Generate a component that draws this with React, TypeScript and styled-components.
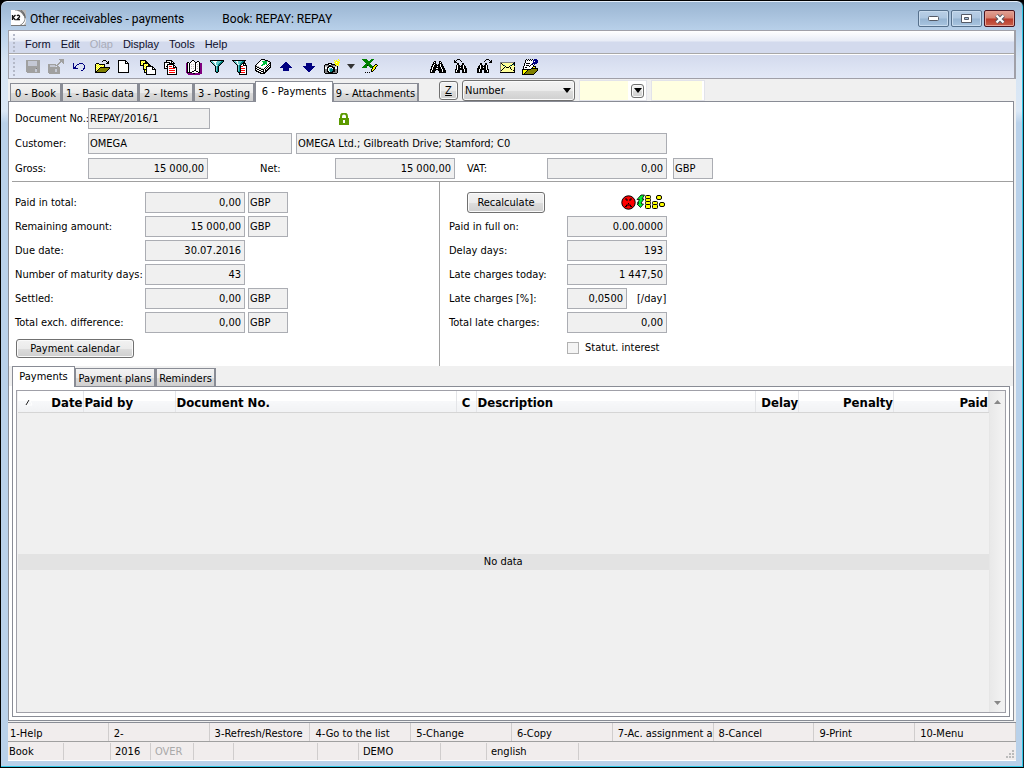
import React from "react";
import styled, { createGlobalStyle, css } from "styled-components";

const GlobalStyle = createGlobalStyle`
  * { box-sizing: border-box; }
  body { margin: 0; background: #000; }
  body, button, input, select, table {
    font-family: "DejaVu Sans Condensed", "DejaVu Sans", sans-serif;
    font-size: 11px;
    line-height: 14px;
    color: #000;
  }
`;

/* ---------- pixel icons ---------- */

const palette: Record<string, string> = {
  k: "#000000",
  w: "#ffffff",
  g: "#a0a0a0",
  l: "#c4c8d4",
  n: "#000080",
  y: "#ffff00",
  c: "#ffff99",
  o: "#808000",
  r: "#ff0000",
  p: "#800080",
  t: "#008080",
  e: "#008000",
  b: "#66cccc",
  s: "#c0c0c0",
  d: "#808080",
  L: "#00c040",
};

const glyphs: Record<string, string[]> = {
  save: [
    "................",
    ".gggggggggggggg.",
    ".gglllllllllggg.",
    ".gglllllllllggg.",
    ".gglllllllllggg.",
    ".gglllllllllggg.",
    ".gglllllllllggg.",
    ".gggggggggggggg.",
    ".gggggggggggggg.",
    ".ggggggggggdggg.",
    ".gggggggggllggg.",
    ".gggggggggllggg.",
    ".gggggggggllggg.",
    "..ggggggggggggg.",
    "................",
    "................",
  ],
  saveExit: [
    "...........ggggg",
    "............gggg",
    "............gggg",
    "...........gg.gg",
    "..........gg...g",
    "gggggggg.gg.....",
    "gglllllggg......",
    "ggllllll.gg.....",
    "gggggggggggg....",
    "gggggggggggg....",
    "gggggggllggg....",
    "gggggggllggg....",
    "gggggggllggg....",
    "gggggggggggg....",
    ".ggggggggggg....",
    "................",
  ],
  undo: [
    "................",
    "................",
    "................",
    "................",
    "..n.....nnnn....",
    "..n...nn....n...",
    "..n..n.......n..",
    "..n.n........n..",
    "..nnn........n..",
    "..nnnnn.....nn..",
    "............n...",
    "..........nn....",
    "................",
    "................",
    "................",
    "................",
  ],
  open: [
    "................",
    ".........kkk....",
    "........k...k.k.",
    ".............kk.",
    "..kkk.......kkk.",
    ".kcyckkkkkk.....",
    ".kycycycyck.....",
    ".kcycycycyk.....",
    ".kycyckkkkkkkkkk",
    ".kcyckoooooooook",
    ".kyckoooooooook.",
    ".kckoooooooook..",
    ".kkoooooooook...",
    ".kkkkkkkkkkk....",
    "................",
    "................",
  ],
  page: [
    "................",
    ".kkkkkkkk.......",
    ".kwwwwwwkk......",
    ".kwwwwwwkwk.....",
    ".kwwwwwwkkkk....",
    ".kwwwwwwwwwk....",
    ".kwwwwwwwwwk....",
    ".kwwwwwwwwwk....",
    ".kwwwwwwwwwk....",
    ".kwwwwwwwwwk....",
    ".kwwwwwwwwwk....",
    ".kwwwwwwwwwk....",
    ".kwwwwwwwwwk....",
    ".kkkkkkkkkkk....",
    "................",
    "................",
  ],
  stack: [
    "................",
    "kkkkkk..........",
    "kycyckk.........",
    "kcycykkk........",
    "kyckkkkkk.......",
    "kcykycyckk......",
    "kkkkcycykkk.....",
    "...kyckkkkkkk...",
    "...kcykwwwwwkk..",
    "...kyckwwwwwkwk.",
    "...kkkkwwwwwkkkk",
    "....kykwwwwwwwwk",
    "....kckwwwwwwwwk",
    "....kkkwwwwwwwwk",
    "......kwwwwwwwwk",
    "......kkkkkkkkkk",
  ],
  pageList: [
    "................",
    "...kkkkkk.......",
    "...kwwwwkk......",
    ".kkkkkkwkwk.....",
    ".kwwwwkkkkkk....",
    ".kwwkkkkkkk.....",
    ".kwwkwwwwwkk....",
    ".kwkkwrrrwkwk...",
    ".kwwkwwwwwkkkk..",
    ".kkkkwrrrrrrwk..",
    "....kwwwwwwwwk..",
    "....kwrrrrrrwk..",
    "....kwwwwwwwwk..",
    "....kwrrrrrrwk..",
    "....kwwwwwwwwk..",
    "....kkkkkkkkkk..",
  ],
  book: [
    "................",
    "......kk........",
    ".....kwwk..kk...",
    ".kk.kwwwwkkwwk..",
    "pkwkwwwwwkwwwkpp",
    "pkwkwswswkwswkpp",
    "pkwkwwwwwkwwwkpp",
    "pkwkwswswkwswkpp",
    "pkwkwwwwwkwwwkpp",
    "pkwkwswswkwswkpp",
    "pkwkwwwwwkwwwkpp",
    "pkwkwwwwkkwwwkpp",
    "pkwkwwkkwwkkwkpp",
    "pkkkkkwwwwwwkkpp",
    ".ppppppkkppppppp",
    "..pppppppppppp..",
  ],
  filter: [
    "................",
    ".kkkkkkkkkkkkkk.",
    ".kbbwwwwbbbbttk.",
    "..kbbwwbbbbttk..",
    "...kbbwbbbttk...",
    "....kbwbbttk....",
    ".....kbwbtk.....",
    "......kbtk......",
    "......kbtk......",
    "......kbtk......",
    "......kbtk......",
    "......kbtk......",
    "......kttk......",
    ".......kk.......",
    "................",
    "................",
  ],
  filterList: [
    "................",
    "kkkkkkkkkkkkkk..",
    ".kbbwwbbbbttk...",
    "..kbbwbbbttkk...",
    "...kbwbbttkkkk..",
    "....kbwbtkwkwk..",
    ".....kbtkwwkkkk.",
    ".....kbtkrrwwwk.",
    ".....kbtkwwwwwk.",
    ".....kbtkrrrrwk.",
    ".....kbtkwwwwwk.",
    ".....kbtkrrrrwk.",
    ".....kttkwwwwwk.",
    "......kkkrrrrwk.",
    ".......kwwwwwwk.",
    ".......kkkkkkkk.",
  ],
  books: [
    "......kkkk......",
    ".....kwwwskkk...",
    "....kwwLLLLLskk.",
    "...kwwwwLLLLwwsk",
    "..kwwwwwLLLLwwkk",
    ".kwwwwwLLLwLwkwk",
    "kswwwwLLwwwwkwkk",
    "kksswwwwwwwkwkwk",
    "kwkksswwwwkwkwkk",
    "kkwwkksswkwkwkk.",
    "kwkkwwkkkwkwkk..",
    "kkwwkkwwkwkkk...",
    ".kkkwwkkkwkk....",
    "...kkkwwkkk.....",
    ".....kkkkk......",
    "................",
  ],
  up: [
    "................",
    "................",
    "................",
    ".......nn.......",
    "......nnnn......",
    ".....nnnnnn.....",
    "....nnnnnnnn....",
    "...nnnnnnnnnn...",
    "..nnnnnnnnnnnn..",
    ".....nnnnnn.....",
    ".....nnnnnn.....",
    ".....nnnnnn.....",
    "................",
    "................",
    "................",
    "................",
  ],
  down: [
    "................",
    "................",
    "................",
    "................",
    ".....nnnnnn.....",
    ".....nnnnnn.....",
    ".....nnnnnn.....",
    "..nnnnnnnnnnnn..",
    "...nnnnnnnnnn...",
    "....nnnnnnnn....",
    ".....nnnnnn.....",
    "......nnnn......",
    ".......nn.......",
    "................",
    "................",
    "................",
  ],
  camera: [
    "..............y.",
    "..........y.y..y",
    "...........yyyy.",
    "..........yywyyy",
    "....kkkk...yyyy.",
    ".kkkkwwkkkkyyyy.",
    "kddddkkddddky.y.",
    "kssskkkkkssssk..",
    "kwwkkwwwkkkwwk..",
    "kwwkwbbtwkkwwk..",
    "kddkwbtttkkddk..",
    "kddkwbtttkkddk..",
    "kddkkwttkkkddk..",
    "kdddkkkkkddddk..",
    ".kkkkkkkkkkkk...",
    "................",
  ],
  sheet: [
    "eeeee....eee....",
    ".eeeee..eee.....",
    "..eeeeeeee......",
    "...eeeeee.......",
    "....eeee........",
    "...eeeeee....kk.",
    "..eeekeeee..kyyk",
    ".eeee..eeeekyyk.",
    "eeeee...eekyyk..",
    "..........kyyk..",
    ".........kyyk...",
    ".........kyk....",
    ".........kk.....",
    "...k.k.k........",
    "................",
    "................",
  ],
  find: [
    "................",
    "................",
    "....kk...kk.....",
    "...kwk...kwk....",
    "...kkk...kkk....",
    "..kkwkk.kkwkk...",
    "..kwkkkkkkwkk...",
    ".kkwkkkwkkwkkk..",
    ".kwkkkkkkkkwkk..",
    ".kwkkkwwkkkwkkk.",
    "kkwkkkkkkkkkwkk.",
    "kwkkkk..kkkkwkkk",
    "kwkkk....kkkwkkk",
    "kkkkk....kkkkkkk",
    "................",
    "................",
  ],
  findPrev: [
    "....kkk.........",
    ".k.k...k........",
    ".kk.....k.......",
    ".kkk............",
    "....kk...kk.....",
    "....kk...kk.....",
    "...kwkk.kkwk....",
    "...kwkkkkkwkk...",
    "...kwkkwkkwkk...",
    "...kwkkkkkwkkk..",
    "..kkwkkkkkkwkk..",
    "..kwkkk..kkwkk..",
    "..kwkkk..kkwkk..",
    "..kkkkk..kkkkk..",
    "................",
    "................",
  ],
  findNext: [
    "..........kkk...",
    ".........k...k.k",
    "........k.....kk",
    ".............kkk",
    "....kk...kk.....",
    "....kk...kk.....",
    "...kwkk.kkwk....",
    "..kkwkkkkkwk....",
    "..kkwkkwkkwk....",
    ".kkkwkkkkkwk....",
    ".kkwkkkkkkwkk...",
    ".kkwkk..kkkwk...",
    ".kkwkk..kkkwk...",
    ".kkkkk..kkkkk...",
    "................",
    "................",
  ],
  mail: [
    "................",
    "................",
    "................",
    ".ddddddddddddddk",
    ".dkccccccccccckk",
    ".dckcccccccccktk",
    ".dccktccccctkcck",
    ".dcccckccckccccc",
    ".dccckckkkckccck",
    ".dcckcccccckccck",
    ".dckcccccccckcck",
    ".dkccccccccccckk",
    ".dccccccccccccck",
    ".kkkkkkkkkkkkkkk",
    "................",
    "................",
  ],
  notes: [
    "....k.k.k.k.nnn.",
    "...kwkwkwkwnnnnn",
    "...kwwwwwwwnwnnn",
    "...kwwwwwwwnnnnn",
    "..kwkkkkwwnnnnn.",
    "..kwwwwwwnkwn...",
    "..kwkkkwkwwk....",
    ".kwwwwwkwwwkkk..",
    ".kwkkwwwwwkyyk..",
    ".kwwwwwwwkkkkkkk",
    "kkkkkkkkkooooook",
    "kyyyykoooooooook",
    "kyyykoooooooook.",
    "kyykoooooooook..",
    "kykoooooooook...",
    "kkkkkkkkkkkk....",
  ],
};

function PixelIcon({ name }: { name: string }) {
  const rects: React.ReactNode[] = [];
  glyphs[name].forEach((row, y) => {
    let x = 0;
    while (x < row.length) {
      const ch = row[x];
      let end = x + 1;
      while (end < row.length && row[end] === ch) end++;
      if (ch !== ".") {
        rects.push(<rect key={`${x}-${y}`} x={x} y={y} width={end - x} height={1} fill={palette[ch]} />);
      }
      x = end;
    }
  });
  return (
    <svg width="16" height="16" viewBox="0 0 16 16" shapeRendering="crispEdges" aria-hidden="true">
      {rects}
    </svg>
  );
}

/* ---------- window frame ---------- */

const WindowFrame = styled.div`
  display: flex;
  flex-direction: column;
  min-height: 100vh;
  padding: 0 7px 6px;
  border: 1px solid #000;
  border-right-color: #14202a;
  border-radius: 7px 7px 0 0;
  box-shadow: inset -1px -1px 0 #2fc7e6, inset 0 1px 0 #e4eefa;
  background: linear-gradient(#99b4d1, #b9d1ea 30px, #d6e4f3 60px, #dbe8f6 110px, #b9d1ea 122px);
`;

const TitleBar = styled.header`
  display: flex;
  align-items: flex-start;
  height: 29px;
  padding: 9px 1px 0 3px;
`;

const AppLogo = styled.svg`
  flex: none;
  margin-right: 4px;
`;

const Title = styled.h1<{ $indent?: boolean }>`
  margin: 0;
  padding-left: ${(p) => (p.$indent ? "38px" : "0")};
  font: 12px/18px Roboto, "Noto Sans", sans-serif;
  white-space: nowrap;
`;

const WindowButtons = styled.div`
  display: flex;
  gap: 2px;
  margin-left: auto;
`;

const WindowButton = styled.button<{ $danger?: boolean }>`
  display: flex;
  align-items: center;
  justify-content: center;
  width: 31px;
  height: 17px;
  padding: 0;
  border: 1px solid ${(p) => (p.$danger ? "#4a1420" : "#56708c")};
  border-radius: 2px;
  box-shadow: inset 0 0 0 1px ${(p) => (p.$danger ? "#e6a093" : "#c8dbee")};
  background: ${(p) =>
    p.$danger
      ? "linear-gradient(#e0a094, #d6806f 48%, #b8392a 52%, #c9604a)"
      : "linear-gradient(#b9cfe6, #adc6e0 48%, #96b4d2 52%, #a9c5e0)"};
`;

const Client = styled.main`
  display: flex;
  flex: 1;
  flex-direction: column;
  background: #f0f0f0;
`;

/* ---------- menu and toolbar ---------- */

const Bars = styled.div`
  border: 1px solid #a0a0a8;
  border-right-width: 2px;
`;

const bar = css`
  display: flex;
  align-items: center;
  padding-left: 4px;
`;

const MenuBar = styled.nav`
  ${bar}
  height: 23px;
  padding-top: 2px;
  border-bottom: 1px solid #a8a8a8;
  background: linear-gradient(#fff, #e8ecf6 10px, #d3daed 11px);
`;

const ToolBar = styled.div`
  ${bar}
  height: 24px;
  border-top: 1px solid #fff;
  background: linear-gradient(#d3daed, #e3e9f7);
`;

const Grip = styled.span`
  width: 2px;
  height: 18px;
  margin-right: 6px;
  background: repeating-linear-gradient(#b4b9c8 0 2px, transparent 2px 4px);
`;

const MenuItem = styled.button`
  height: 20px;
  margin-right: 10px;
  padding: 2px 0 0;
  border: 0;
  background: none;
  font: 11px/14px "Liberation Sans", Arial, sans-serif;
  color: #10102c;

  &:first-of-type {
    margin-left: 4px;
  }

  &:disabled {
    color: #a9acb8;
  }
`;

const ToolButton = styled.button<{ $narrow?: boolean }>`
  display: flex;
  flex: none;
  align-items: center;
  justify-content: center;
  width: ${(p) => (p.$narrow ? "15px" : "23px")};
  height: 22px;
  padding: 0;
  border: 0;
  background: none;
`;

const ToolGap = styled.span`
  width: 45px;
`;

/* ---------- tabs ---------- */

const TabStrip = styled.div<{ $inner?: boolean }>`
  display: flex;
  align-items: flex-end;
  height: ${(p) => (p.$inner ? "20px" : "22px")};
  padding-left: ${(p) => (p.$inner ? "0" : "2px")};
  background: #f0f0f0;
`;

const Tab = styled.button<{ $width: number; $active?: boolean }>`
  flex: none;
  width: ${(p) => p.$width}px;
  height: 18px;
  padding: 2px 0 0;
  border: 1px solid #898c95;
  border-right-width: 2px;
  border-bottom: 0;
  background: linear-gradient(#f3f3f3, #ebebeb 50%, #dcdcdc 51%, #cfcfcf);
  white-space: nowrap;

  ${(p) =>
    p.$active &&
    css`
      position: relative;
      height: 21px;
      margin-bottom: -1px;
      padding: 0;
      border-right-width: 1px;
      background: #fff;
    `}
`;

const Search = styled.div`
  display: flex;
  align-items: flex-start;
  gap: 4px;
  height: 21px;
  padding-left: 20px;
`;

const button = css`
  border: 1px solid #707070;
  border-radius: 3px;
  box-shadow: inset 0 0 0 1px #fafafa;
  background: linear-gradient(#f2f2f2, #ebebeb 50%, #dddddd 51%, #cfcfcf);
`;

const ZButton = styled.button`
  ${button}
  width: 19px;
  height: 19px;
  margin-top: 1px;
  padding: 0;
  text-decoration: underline;
`;

const SelectWrap = styled.span`
  position: relative;

  & > svg {
    position: absolute;
    top: 8px;
    right: 4px;
    pointer-events: none;
  }
`;

const NumberSelect = styled.select`
  ${button}
  display: block;
  width: 113px;
  height: 21px;
  padding: 0 2px;
  appearance: none;
`;

const YellowBox = styled.span<{ $width: number }>`
  display: flex;
  align-items: center;
  width: ${(p) => p.$width}px;
  height: 21px;
  padding-right: 2px;
  border: 1px solid #e2e3ea;
  background: #fff;
`;

const YellowInput = styled.input`
  flex: 1;
  min-width: 0;
  height: 19px;
  padding: 0 2px;
  border: 0;
  background: #ffffe1;
`;

const DropButton = styled.button`
  ${button}
  display: flex;
  align-items: center;
  justify-content: center;
  width: 13px;
  height: 14px;
  margin-left: 3px;
  padding: 0;
`;

/* ---------- form ---------- */

const Panel = styled.section`
  display: flex;
  flex: 1;
  flex-direction: column;
  margin-right: 2px;
  padding: 0 0 3px;
  border: 1px solid #898c95;
  background: #fff;
`;

const Head = styled.div`
  display: flex;
  flex-direction: column;
  gap: 4px;
  margin: 0 0 0 3px;
  padding: 6px 0 2px 3px;
  border-bottom: 1px solid #a0a0a0;
`;

const Row = styled.div`
  display: flex;
  align-items: center;
  height: 21px;
`;

const Label = styled.label<{ $width: number }>`
  flex: none;
  width: ${(p) => p.$width}px;
  white-space: nowrap;
`;

const Field = styled.input<{ $width: number; $right?: boolean; $gap?: number }>`
  flex: none;
  width: ${(p) => p.$width}px;
  height: 21px;
  margin-right: ${(p) => p.$gap ?? 3}px;
  padding: 0 3px 1px 1px;
  border: 1px solid #abadb3;
  border-radius: 0;
  background: #f0f0f0;
  text-align: ${(p) => (p.$right ? "right" : "left")};
`;

const LockMark = styled.svg`
  margin-left: 126px;
`;

const Details = styled.div`
  display: flex;
`;

const LeftDetails = styled.div`
  display: flex;
  flex-direction: column;
  gap: 3px;
  width: 431px;
  padding: 10px 0 7px 6px;
  border-right: 1px solid #a0a0a0;
`;

const RightDetails = styled.div`
  display: flex;
  flex-direction: column;
  gap: 3px;
  padding: 10px 0 0 9px;
`;

const ButtonRow = styled(Row)`
  margin-top: 2px;
`;

const PushButton = styled.button<{ $width: number; $start?: number }>`
  ${button}
  flex: none;
  width: ${(p) => p.$width}px;
  height: ${(p) => (p.$start ? "21px" : "19px")};
  margin-left: ${(p) => p.$start ?? 1}px;
  padding: 0;
`;

const FaceMark = styled.svg`
  margin-left: 76px;
`;

const CheckRow = styled.label`
  display: flex;
  align-items: center;
  gap: 6px;
  margin: 5px 0 0 118px;
`;

const CheckBox = styled.input`
  width: 12px;
  height: 12px;
  margin: 0;
  border: 1px solid #b1b1b1;
  background: #f4f4f4;
  appearance: none;
`;

/* ---------- payments list ---------- */

const ListArea = styled.div`
  display: flex;
  flex: 1;
  flex-direction: column;
  padding: 0 3px 0 3px;
  background: linear-gradient(#f0f0f0 20px, #fff 20px);
`;

const ListPanel = styled.div`
  display: flex;
  flex: 1;
  padding: 3px;
  border: 1px solid #898c95;
  background: #fff;
`;

const ListBox = styled.div`
  display: flex;
  flex: 1;
  padding: 0 1px;
  border: 1px solid #a0a0a8;
  background: #f0f0f0;
`;

const Grid = styled.table`
  flex: 1;
  width: 100%;
  border-collapse: collapse;
  table-layout: fixed;
`;

const HeadCell = styled.th<{ $width?: number; $align?: string }>`
  width: ${(p) => (p.$width ? `${p.$width}px` : "auto")};
  height: 21px;
  padding: 3px 0 0 ${(p) => (p.$align ? "0" : "1px")};
  border-right: 1px solid #e4e5e8;
  border-bottom: 1px solid #d5d5d5;
  background: linear-gradient(#fff, #fff 50%, #f7f8fa 50%, #f1f2f4);
  font-size: 13px;
  line-height: 16px;
  text-align: ${(p) => p.$align ?? "left"};
  white-space: nowrap;
`;

const SortMark = styled.svg`
  float: left;
  margin: 4px 0 0 7px;
`;

const EmptyCell = styled.td`
  padding: 0;
  vertical-align: middle;
`;

const EmptyBand = styled.div`
  height: 16px;
  background: #e3e3e3;
  line-height: 16px;
  text-align: center;
`;

const ScrollBar = styled.div`
  display: flex;
  flex-direction: column;
  justify-content: space-between;
  width: 15px;
  border-left: 1px solid #e6e6e6;
  background: linear-gradient(90deg, #e9e9e9, #f3f3f3);
`;

const ScrollButton = styled.button`
  height: 20px;
  padding: 0;
  border: 0;
  background: none;
`;

/* ---------- bottom bars ---------- */

const FunctionBar = styled.div`
  display: grid;
  grid-template-columns: repeat(10, 1fr);
  height: 20px;
  margin-top: 1px;
  border-top: 1px solid #898c95;
  border-bottom: 1px solid #a0a0a0;
  background: #f1eded;
`;

const FunctionKey = styled.button`
  min-width: 0;
  padding: 3px 0 0 5px;
  border: 0;
  border-right: 1px solid #d0cdcd;
  background: none;
  overflow: hidden;
  text-align: left;
  white-space: nowrap;

  &:first-child {
    padding-left: 2px;
  }
`;

const StatusBar = styled.footer`
  display: flex;
  height: 19px;
  padding-top: 1px;
  border-bottom: 1px solid #fff;
  background: #f1eded;
`;

const StatusCell = styled.span<{ $width?: number; $muted?: boolean }>`
  flex: ${(p) => (p.$width ? "none" : "1")};
  width: ${(p) => (p.$width ? `${p.$width}px` : "auto")};
  padding: 2px 0 0 ${(p) => (p.$width === 56 ? "1px" : "4px")};
  border-right: ${(p) => (p.$width ? "1px solid #d0cdcd" : "0")};
  color: ${(p) => (p.$muted ? "#a9a9a9" : "#000")};
`;

const SizeGrip = styled.svg`
  align-self: flex-end;
`;

/* ---------- data ---------- */

const menus = ["Form", "Edit", "Olap", "Display", "Tools", "Help"];

const tabs: [string, number][] = [
  ["0 - Book", 52],
  ["1 - Basic data", 77],
  ["2 - Items", 55],
  ["3 - Posting", 61],
  ["6 - Payments", 78],
  ["9 - Attachments", 86],
];

const listTabs: [string, number][] = [
  ["Payments", 63],
  ["Payment plans", 81],
  ["Reminders", 60],
];

const tools = ["save", "saveExit", "undo", "open", "page", "stack", "pageList", "book", "filter", "filterList", "books", "up", "down", "camera"];
const searchTools = ["find", "findPrev", "findNext", "mail", "notes"];

const leftRows: [string, string, string?][] = [
  ["Paid in total:", "0,00", "GBP"],
  ["Remaining amount:", "15 000,00", "GBP"],
  ["Due date:", "30.07.2016"],
  ["Number of maturity days:", "43"],
  ["Settled:", "0,00", "GBP"],
  ["Total exch. difference:", "0,00", "GBP"],
];

const rightRows: [string, string, string?][] = [
  ["Paid in full on:", "0.00.0000"],
  ["Delay days:", "193"],
  ["Late charges today:", "1 447,50"],
  ["Late charges [%]:", "0,0500", "[/day]"],
  ["Total late charges:", "0,00"],
];

const functionKeys = ["1-Help", "2-", "3-Refresh/Restore", "4-Go to the list", "5-Change", "6-Copy", "7-Ac. assignment an", "8-Cancel", "9-Print", "10-Menu"];

const statusCells: [string, number][] = [
  ["Book", 56],
  ["", 47],
  ["2016", 40],
  ["OVER", 43],
  ["", 40],
  ["", 84],
  ["", 41],
  ["DEMO", 82],
  ["", 46],
  ["english", 92],
];

const Caret = ({ color = "#000" }: { color?: string }) => (
  <svg width="8" height="5" viewBox="0 0 8 5" aria-hidden="true">
    <path d="M0 0h8L4 5z" fill={color} />
  </svg>
);

function Coins() {
  return (
    <FaceMark width="45" height="17" viewBox="0 0 45 17" aria-label="Overdue">
      <circle cx="7.500" cy="8.500" r="6.700" fill="#f00" stroke="#000" />
      <path d="M4 5h2v2M11 5H9v2M4 12.500h1.500v-1.500h4v1.500H11M7 9.500h1" fill="none" stroke="#000" />
      <path d="M20 1l-4 4.500h2.500L16.500 9h1.500l-2 1 3.500 3.500 3-3.500h-1.500l-1-1 3-4h-2l2.500-4z" fill="#0e3" stroke="#000" strokeWidth=".800" />
      <g fill="#ff0" stroke="#000">
        <rect x="24.500" y="1.500" width="5" height="3" rx="1" />
        <rect x="24.500" y="4.500" width="5" height="3" rx="1" />
        <rect x="24.500" y="7.500" width="5" height="3" rx="1" />
        <rect x="24.500" y="10.500" width="5" height="4" rx="1" />
        <rect x="31.500" y="7.500" width="5" height="3" rx="1" />
        <rect x="31.500" y="10.500" width="5" height="4" rx="1" />
        <rect x="35.500" y="1.500" width="5" height="4" rx="1.500" />
        <rect x="38.500" y="8.500" width="5" height="4" rx="1.500" />
      </g>
    </FaceMark>
  );
}

export default function App() {
  return (
    <>
      <GlobalStyle />
      <WindowFrame>
        <TitleBar>
          <AppLogo width="15" height="16" viewBox="0 0 15 16" aria-hidden="true">
            <path d="M0 0h15v16H0z" fill="#fff" />
            <path d="M8 0l7 9V0zM15 10c0 3-2 5-4 6h4z" fill="#bbb" />
            <path d="M7 0c4 1 7 4 7 8s-3 7-7 8M10 0c3 2 4 5 4 8M4 0c4 0 8 3 9 6" fill="none" stroke="#555" strokeWidth=".700" />
            <path d="M1.500 5v5M4.500 5L2 7.500 4.500 10M6 6c1-1.500 3-.500 2.500 1L6 9.500h3" fill="none" stroke="#111" strokeWidth="1.300" />
            <path d="M0 15.500h15" stroke="#777" />
          </AppLogo>
          <Title>Other receivables - payments</Title>
          <Title as="span" $indent>Book: REPAY: REPAY</Title>
          <WindowButtons>
            <WindowButton aria-label="Minimize">
              <svg width="11" height="5" viewBox="0 0 11 5"><rect x=".500" y=".500" width="10" height="4" rx="1" fill="#fff" stroke="#555a66" /></svg>
            </WindowButton>
            <WindowButton aria-label="Maximize">
              <svg width="11" height="9" viewBox="0 0 11 9"><path d="M.5.5h10v8H.5zM3.500 3.500v2h4v-2z" fill="#fff" fillRule="evenodd" stroke="#555a66" /></svg>
            </WindowButton>
            <WindowButton $danger aria-label="Close">
              <svg width="12" height="10" viewBox="0 0 12 10">
                <path d="M2.500 1.500l7 7M9.500 1.500l-7 7" stroke="#555a66" strokeWidth="4" />
                <path d="M2.500 1.500l7 7M9.500 1.500l-7 7" stroke="#fff" strokeWidth="2.200" />
              </svg>
            </WindowButton>
          </WindowButtons>
        </TitleBar>

        <Client>
          <Bars>
            <MenuBar>
              <Grip />
              {menus.map((m) => (
                <MenuItem key={m} disabled={m === "Olap"}>{m}</MenuItem>
              ))}
            </MenuBar>
            <ToolBar>
              <Grip />
              {tools.map((t) => (
                <ToolButton key={t} aria-label={t}><PixelIcon name={t} /></ToolButton>
              ))}
              <ToolButton $narrow aria-label="Camera options"><Caret color="#333" /></ToolButton>
              <ToolButton aria-label="sheet"><PixelIcon name="sheet" /></ToolButton>
              <ToolGap />
              {searchTools.map((t) => (
                <ToolButton key={t} aria-label={t}><PixelIcon name={t} /></ToolButton>
              ))}
            </ToolBar>
          </Bars>

          <TabStrip>
            {tabs.map(([name, width]) => (
              <Tab key={name} $width={width} $active={name.startsWith("6")}>{name}</Tab>
            ))}
            <Search>
              <ZButton>Z</ZButton>
              <SelectWrap>
                <NumberSelect aria-label="Search by"><option>Number</option></NumberSelect>
                <Caret />
              </SelectWrap>
              <YellowBox $width={68}>
                <YellowInput aria-label="Search from" />
                <DropButton aria-label="Choose"><Caret /></DropButton>
              </YellowBox>
              <YellowBox $width={54}>
                <YellowInput aria-label="Search to" />
              </YellowBox>
            </Search>
          </TabStrip>

          <Panel>
            <Head>
              <Row>
                <Label $width={73} htmlFor="doc">Document No.:</Label>
                <Field $width={122} id="doc" readOnly value="REPAY/2016/1" />
                <LockMark width="10" height="12" viewBox="0 0 10 12" aria-label="Locked">
                  <path d="M2 6V3.500a3 3 0 0 1 6 0V6" fill="none" stroke="#5c9a00" strokeWidth="2" />
                  <path d="M0 5h10v7H0z" fill="#5c9a00" />
                  <path d="M4 7h2v3H4z" fill="#fff" />
                </LockMark>
              </Row>
              <Row>
                <Label $width={73} htmlFor="customer">Customer:</Label>
                <Field $width={204} id="customer" $gap={4} readOnly value="OMEGA" />
                <Field $width={371} aria-label="Customer address" readOnly value="OMEGA Ltd.; Gilbreath Drive; Stamford; C0" />
              </Row>
              <Row>
                <Label $width={73} htmlFor="gross">Gross:</Label>
                <Field $width={120} id="gross" $right $gap={52} readOnly value="15 000,00" />
                <Label $width={75} htmlFor="net">Net:</Label>
                <Field $width={120} id="net" $right $gap={12} readOnly value="15 000,00" />
                <Label $width={80} htmlFor="vat">VAT:</Label>
                <Field $width={120} id="vat" $right $gap={6} readOnly value="0,00" />
                <Field $width={40} aria-label="Currency" readOnly value="GBP" />
              </Row>
            </Head>

            <Details>
              <LeftDetails>
                {leftRows.map(([label, value, unit], i) => (
                  <Row key={label}>
                    <Label $width={130} htmlFor={`left-${i}`}>{label}</Label>
                    <Field $width={100} id={`left-${i}`} $right readOnly value={value} />
                    {unit && <Field $width={40} aria-label={`${label} currency`} readOnly value={unit} />}
                  </Row>
                ))}
                <ButtonRow>
                  <PushButton $width={118}>Payment calendar</PushButton>
                </ButtonRow>
              </LeftDetails>
              <RightDetails>
                <Row>
                  <PushButton $width={78} $start={18}>Recalculate</PushButton>
                  <Coins />
                </Row>
                {rightRows.map(([label, value, unit], i) => (
                  <Row key={label}>
                    <Label $width={118} htmlFor={`right-${i}`}>{label}</Label>
                    <Field $width={unit ? 60 : 100} id={`right-${i}`} $right $gap={10} readOnly value={value} />
                    {unit}
                  </Row>
                ))}
                <CheckRow>
                  <CheckBox type="checkbox" />
                  Statut. interest
                </CheckRow>
              </RightDetails>
            </Details>

            <ListArea>
              <TabStrip $inner>
                {listTabs.map(([name, width]) => (
                  <Tab key={name} $width={width} $active={name === "Payments"}>{name}</Tab>
                ))}
              </TabStrip>
              <ListPanel>
                <ListBox>
                  <Grid>
                    <thead>
                      <tr>
                        <HeadCell $width={65} $align="right">
                          <SortMark width="8" height="7" viewBox="0 0 8 7" aria-hidden="true">
                            <path d="M1 6L4 1" stroke="#222" fill="none" />
                            <path d="M5 1l2 5H2" stroke="#fff" fill="none" />
                          </SortMark>
                          Date
                        </HeadCell>
                        <HeadCell $width={92}>Paid by</HeadCell>
                        <HeadCell $width={281}>Document No.</HeadCell>
                        <HeadCell $width={20} $align="center">C</HeadCell>
                        <HeadCell>Description</HeadCell>
                        <HeadCell $width={43} $align="right">Delay</HeadCell>
                        <HeadCell $width={95} $align="right">Penalty</HeadCell>
                        <HeadCell $width={95} $align="right">Paid</HeadCell>
                      </tr>
                    </thead>
                    <tbody>
                      <tr>
                        <EmptyCell colSpan={8}><EmptyBand>No data</EmptyBand></EmptyCell>
                      </tr>
                    </tbody>
                  </Grid>
                  <ScrollBar>
                    <ScrollButton aria-label="Scroll up">
                      <svg width="7" height="4" viewBox="0 0 7 4"><path d="M0 4h7L3.500 0z" fill="#888" /></svg>
                    </ScrollButton>
                    <ScrollButton aria-label="Scroll down">
                      <svg width="7" height="4" viewBox="0 0 7 4"><path d="M0 0h7L3.500 4z" fill="#888" /></svg>
                    </ScrollButton>
                  </ScrollBar>
                </ListBox>
              </ListPanel>
            </ListArea>
          </Panel>

          <FunctionBar>
            {functionKeys.map((k) => (
              <FunctionKey key={k}>{k}</FunctionKey>
            ))}
          </FunctionBar>
          <StatusBar>
            {statusCells.map(([text, width], i) => (
              <StatusCell key={i} $width={width} $muted={text === "OVER"}>{text}</StatusCell>
            ))}
            <StatusCell />
            <SizeGrip width="11" height="11" viewBox="0 0 11 11" aria-hidden="true">
              <path d="M7 1h2v2H7zM4 4h2v2H4zM7 4h2v2H7zM1 7h2v2H1zM4 7h2v2H4zM7 7h2v2H7z" fill="#bbb" />
            </SizeGrip>
          </StatusBar>
        </Client>
      </WindowFrame>
    </>
  );
}
